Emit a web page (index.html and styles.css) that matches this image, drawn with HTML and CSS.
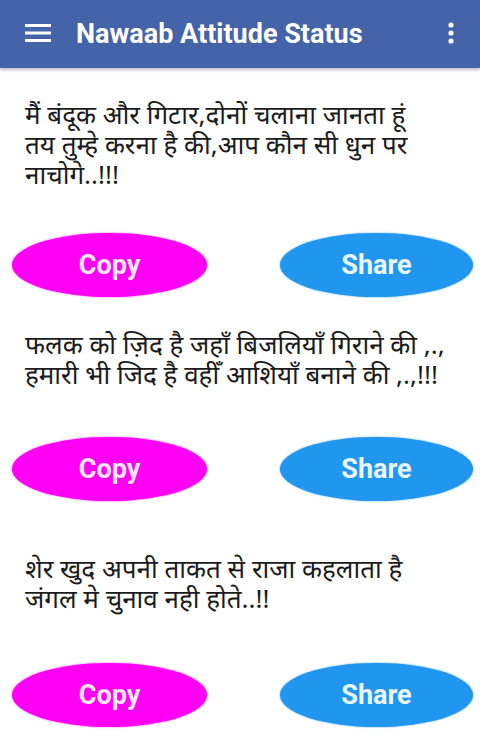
FILE: index.html
```html
<!DOCTYPE html>
<html lang="hi">
<head>
<meta charset="utf-8">
<title>Nawaab Attitude Status</title>
<link rel="stylesheet" href="styles.css">
</head>
<body>
<header class="appbar">
  <svg class="menu-icon" width="26" height="20" viewBox="0 0 26 20" aria-hidden="true">
    <rect x="0" y="1" width="26" height="3" fill="#fff"/>
    <rect x="0" y="8.5" width="26" height="3" fill="#fff"/>
    <rect x="0" y="16" width="26" height="3" fill="#fff"/>
  </svg>
  <h1 class="title">Nawaab Attitude Status</h1>
  <svg class="more-icon" width="6" height="22" viewBox="0 0 6 22" aria-hidden="true">
    <circle cx="3" cy="3" r="2.6" fill="#fff"/>
    <circle cx="3" cy="11" r="2.6" fill="#fff"/>
    <circle cx="3" cy="19" r="2.6" fill="#fff"/>
  </svg>
</header>
<main class="list">
  <section class="item item-1">
    <p class="status">मैं बंदूक और गिटार,दोनों चलाना जानता हूं<br>तय तुम्हे करना है की,आप कौन सी धुन पर<br>नाचोगे..!!!</p>
    <div class="actions">
      <button class="btn btn-copy">Copy</button>
      <button class="btn btn-share">Share</button>
    </div>
  </section>
  <section class="item item-2">
    <p class="status">फलक को ज़िद है जहाँ बिजलियाँ गिराने की ,.,<br>हमारी भी जिद है वहीँ आशियाँ बनाने की ,.,!!!</p>
    <div class="actions">
      <button class="btn btn-copy">Copy</button>
      <button class="btn btn-share">Share</button>
    </div>
  </section>
  <section class="item item-3">
    <p class="status">शेर खुद अपनी ताकत से राजा कहलाता है<br>जंगल मे चुनाव नही होते..!!</p>
    <div class="actions">
      <button class="btn btn-copy">Copy</button>
      <button class="btn btn-share">Share</button>
    </div>
  </section>
</main>
</body>
</html>
```
FILE: styles.css
```css
html, body {
  margin: 0;
  padding: 0;
  background: #ffffff;
}
body {
  width: 480px;
  height: 745px;
  overflow: hidden;
  font-family: "Noto Sans", "Noto Sans Devanagari", "Lohit Devanagari", "FreeSans", sans-serif;
}
.appbar {
  height: 68px;
  background: #4563a8;
  display: flex;
  align-items: center;
  padding: 0 26px 0 25px;
  box-shadow: 0 2px 3px rgba(0,0,0,0.25);
  position: relative;
  z-index: 1;
}
.menu-icon {
  flex: none;
  margin-top: -2px;
}
.title {
  margin: 0 0 0 25px;
  flex: 1;
  font-family: Roboto, "Liberation Sans", sans-serif;
  font-weight: 700;
  font-size: 27px;
  color: #ffffff;
  letter-spacing: 0;
}
.more-icon {
  flex: none;
  margin-top: -2px;
}
.list {
  display: flex;
  flex-direction: column;
}
.item {
  display: flex;
  flex-direction: column;
}
.status {
  margin: 0;
  padding: 0 10px 0 25px;
  font-size: 26px;
  line-height: 30px;
  color: #1b1b1b;
}
.item-1 .status { margin-top: 31px; }
.item-2 .status { margin-top: 32px; }
.item-3 .status { margin-top: 52px; }
.actions {
  display: flex;
  padding-left: 12px;
  gap: 73px;
}
.item-1 .actions { margin-top: 44px; }
.item-2 .actions { margin-top: 48px; }
.item-3 .actions { margin-top: 50px; }
.btn {
  width: 195px;
  height: 64px;
  border-radius: 50%;
  border: none;
  font-family: Roboto, "Liberation Sans", sans-serif;
  font-weight: 700;
  font-size: 27px;
  padding: 0;
  cursor: pointer;
}
.btn-copy {
  background: #ff00f5;
  color: #ffe6fb;
  box-shadow: 0 0 2px #ff40ff;
}
.btn-share {
  width: 193px;
  background: #2196ee;
  color: #eaf6ff;
  box-shadow: 0 0 2px #4aa8ff;
}
```
